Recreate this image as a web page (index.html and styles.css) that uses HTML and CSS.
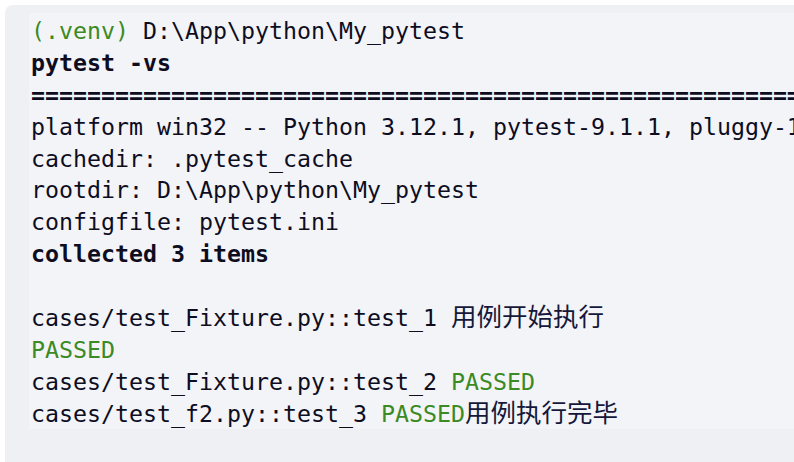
FILE: index.html
```html
<!DOCTYPE html>
<html lang="zh-CN">
<head>
<meta charset="utf-8">
<title>pytest output</title>
<link rel="stylesheet" href="styles.css">
</head>
<body>
<div class="block">
<pre class="code"><span class="venv">(.venv)</span> D:\App\python\My_pytest
<b>pytest -vs</b>
<b>============================================================================</b>
platform win32 -- Python 3.12.1, pytest-9.1.1, pluggy-1.6.0
cachedir: .pytest_cache
rootdir: D:\App\python\My_pytest
configfile: pytest.ini
<b>collected 3 items</b>

cases/test_Fixture.py::test_1 <span class="cjk">用例开始执行</span>
<span class="ok">PASSED</span>
cases/test_Fixture.py::test_2 <span class="ok">PASSED</span>
cases/test_f2.py::test_3 <span class="ok">PASSED</span><span class="cjk">用例执行完毕</span>
</pre>
</div>
</body>
</html>
```
FILE: styles.css
```css
html, body {
  margin: 0;
  padding: 0;
  background: #ffffff;
  overflow: hidden;
}
.block {
  margin: 5px 0 0 5px;
  height: 470px;
  background: #eff0f4;
  border-radius: 8px 0 0 0;
  padding: 8px 0 0 24px;
  box-sizing: border-box;
}
.code {
  margin: 0;
  background: #f3f4f7;
  font-family: "DejaVu Sans Mono", "Noto Sans CJK SC", monospace;
  font-size: 23.25px;
  line-height: 31.875px;
  color: #0d0d1f;
  white-space: pre;
  padding: 2px 0 0 2px;
  overflow: hidden;
}
.code b {
  font-weight: bold;
}
.venv, .ok {
  color: #3b8a24;
}
.cjk {
  font-family: "Noto Sans CJK SC", sans-serif;
  font-size: 25.5px;
  line-height: 1;
  color: #15183a;
}
```
